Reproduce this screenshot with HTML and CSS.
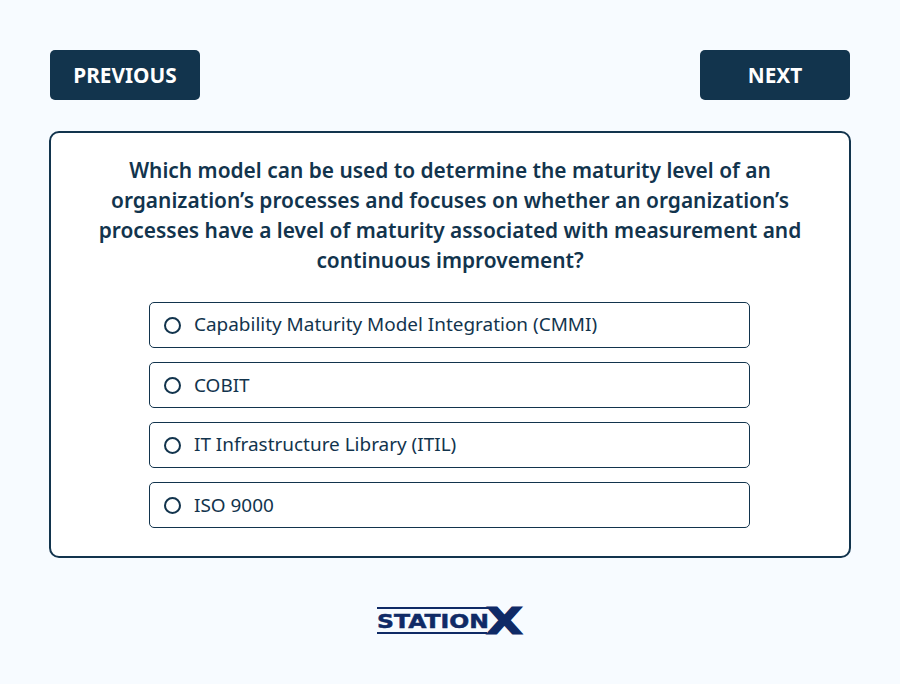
FILE: index.html
```html
<!DOCTYPE html>
<html lang="en">
<head>
  <meta charset="UTF-8" />
  <meta name="viewport" content="width=device-width, initial-scale=1.0" />
  <title>Quiz</title>
  <link rel="stylesheet" href="styles.css">
</head>
<body>
  <div class="nav">
    <button class="nav-btn">PREVIOUS</button>
    <button class="nav-btn">NEXT</button>
  </div>

  <div class="card">
    <p class="question">Which model can be used to determine the maturity level of an organization’s processes and focuses on whether an organization’s processes have a level of maturity associated with measurement and continuous improvement?</p>
    <div class="answers">
      <label class="answer"><span class="radio"></span><span class="answer-text raised">Capability Maturity Model Integration (CMMI)</span></label>
      <label class="answer"><span class="radio"></span><span class="answer-text">COBIT</span></label>
      <label class="answer"><span class="radio"></span><span class="answer-text raised">IT Infrastructure Library (ITIL)</span></label>
      <label class="answer"><span class="radio"></span><span class="answer-text">ISO 9000</span></label>
    </div>
  </div>

  <div class="footer">
    <svg class="logo" width="148" height="30" viewBox="0 0 148 30">
      <rect x="1" y="1" width="113" height="2" fill="#0f2a66" />
      <rect x="1" y="26" width="110" height="2" fill="#0f2a66" />
      <text class="logo-text" x="1" y="22" textLength="112" lengthAdjust="spacingAndGlyphs">STATION</text>
      <text class="logo-x" x="110" y="28" textLength="37" lengthAdjust="spacingAndGlyphs">X</text>
    </svg>
  </div>
</body>
</html>
```

FILE: styles.css
```css
body {
  margin: 0;
  background: #f7fbff;
  color: #12344d;
  font-family: "Noto Sans", sans-serif;
  padding: 50px 50px 0;
}

.nav { display: flex; justify-content: space-between; }
.nav-btn {
  width: 150px; height: 50px;
  background: #12344d; color: #fff; border: none; border-radius: 5px;
  font-family: "Noto Sans", sans-serif;
  font-size: 20.8px; font-weight: 700;
  padding: 0 0 1px;
  cursor: pointer;
}

.card {
  margin: 31px -1px 0;
  height: 427px;
  box-sizing: border-box;
  background: #fff;
  border: 2px solid #12344d;
  border-radius: 10px;
  padding: 22px 46px 0;
}

.question {
  margin: 0;
  text-align: center;
  font-size: 20.9px;
  line-height: 30px;
  font-weight: 600;
}

.answers {
  display: flex; flex-direction: column; gap: 14px;
  width: 601px;
  margin: 27px 0 0 52px;
}
.answer {
  display: flex; align-items: center;
  height: 46px; box-sizing: border-box;
  padding-left: 14px;
  border: 1px solid #12344d; border-radius: 5px;
  font-size: 18.95px;
}
.answer-text.raised { margin-bottom: 3px; }
.radio {
  width: 17px; height: 17px; box-sizing: border-box;
  border: 2px solid #12344d; border-radius: 50%;
  margin-right: 13px;
}

.footer { display: flex; justify-content: center; margin-top: 48px; }
.logo { overflow: visible; }
.logo-text {
  font-family: "DejaVu Sans", sans-serif;
  font-size: 19.5px; font-weight: 700;
  fill: #0f2a66; stroke: #0f2a66; stroke-width: .5;
}
.logo-x {
  font-family: "DejaVu Sans", sans-serif;
  font-size: 38px; font-weight: 700;
  fill: #0f2a66; stroke: #0f2a66; stroke-width: 1.2;
}
```
